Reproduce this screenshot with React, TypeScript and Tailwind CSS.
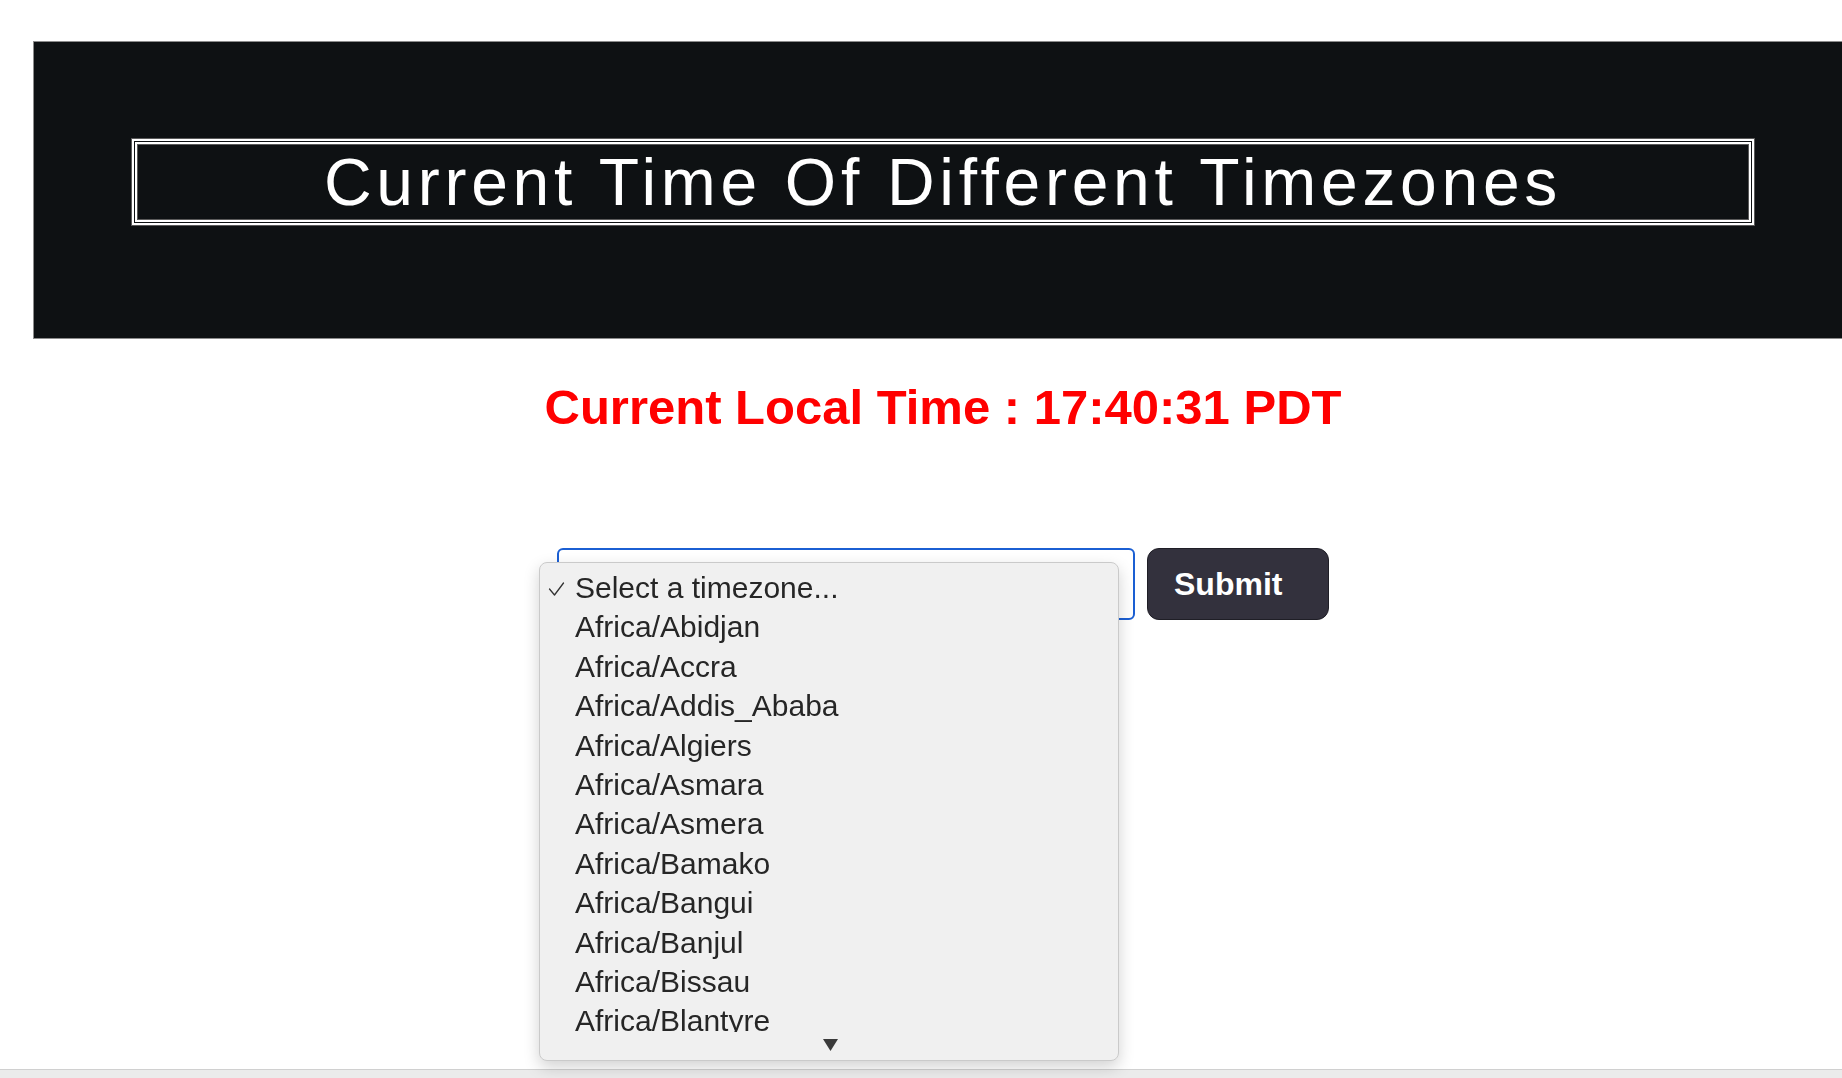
import React from 'react';

const zones = [
  'Select a timezone...',
  'Africa/Abidjan',
  'Africa/Accra',
  'Africa/Addis_Ababa',
  'Africa/Algiers',
  'Africa/Asmara',
  'Africa/Asmera',
  'Africa/Bamako',
  'Africa/Bangui',
  'Africa/Banjul',
  'Africa/Bissau',
  'Africa/Blantyre',
];

const Check = () => (
  <svg className="absolute left-[8px] top-[14px]" width="17" height="15" viewBox="0 0 17 15" fill="none">
    <path d="M1.5 7 L6.5 13 L15.5 1" stroke="#333" strokeWidth="1.3" strokeLinecap="round" strokeLinejoin="round" />
  </svg>
);

export default function App() {
  return (
    <div className="relative h-screen w-full overflow-hidden bg-white font-['Liberation_Sans',Arial,sans-serif]">
      <div className="w-[1886px]">
        <header className="mx-[33px] mt-[41px] border border-[#8c8c8c] bg-[#0e1113] px-[98px] pt-[97px] pb-[113px]">
          <div className="border-2 border-white p-px shadow-[0_0_0_1px_#5a5a5a]">
            <div className="border-2 border-white shadow-[inset_0_0_0_1px_#5a5a5a]">
              <h1 className="text-center text-[66px] leading-[76px] tracking-[4.7px] text-white">
                Current Time Of Different Timezones
              </h1>
            </div>
          </div>
        </header>

        <h2 className="mt-[40px] text-center text-[49px] font-bold leading-[56px] text-[#ff0000]">
          Current Local Time : 17:40:31 PDT
        </h2>

        <div className="mt-[113px] flex justify-center gap-[12px]">
          <div className="relative h-[72px] w-[578px] rounded-[6px] border-2 border-[#1b5fd3] bg-white">
            <div className="absolute left-[-20px] top-[12px] z-10 h-[499px] w-[580px] overflow-hidden rounded-[8px] border border-[#cacaca] bg-[#f0f0f0] shadow-[0_6px_16px_rgba(0,0,0,0.18)]">
              <div className="h-[469px] overflow-hidden pt-[5px]">
                {zones.map((z, i) => (
                  <div key={z} className="relative h-[39.4px] pl-[35px] text-[30px] leading-[39.4px] text-[#262626]">
                    {i === 0 && <Check />}
                    {z}
                  </div>
                ))}
              </div>
              <div className="flex justify-center pt-[7px] pl-[3px]">
                <svg width="15" height="12" viewBox="0 0 15 12">
                  <polygon points="0,0 15,0 7.5,12" fill="#3a3a3a" />
                </svg>
              </div>
            </div>
          </div>
          <button className="flex h-[72px] w-[182px] items-center rounded-[12px] border border-[#1f1e26] bg-[#33313d] pl-[26px] text-[32px] font-bold text-white">
            Submit
          </button>
        </div>
      </div>

      <div className="fixed bottom-0 left-0 right-0 h-[9px] border-t border-[#d0d0d0] bg-[#ebebeb]" />
    </div>
  );
}
